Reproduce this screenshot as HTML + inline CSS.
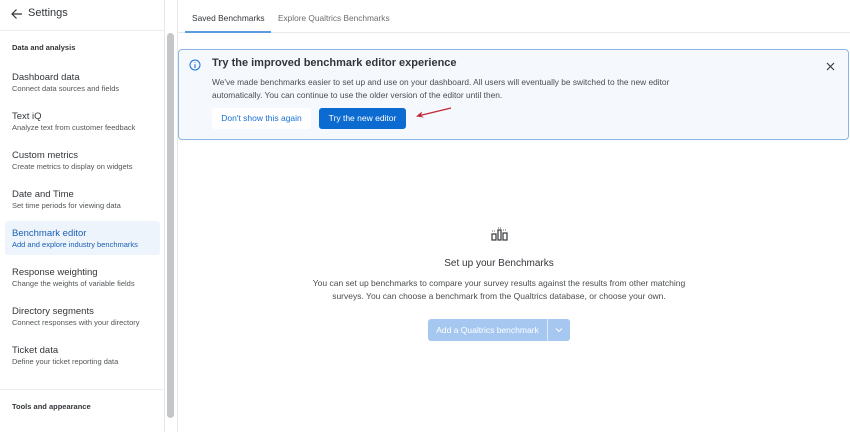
<!DOCTYPE html><html><head><style>
*{margin:0;padding:0;box-sizing:border-box}
body{width:850px;height:432px;overflow:hidden;font-family:"Liberation Sans",sans-serif;background:#fff;position:relative;color:#32363a}
.a{position:absolute}
.t{font-size:9.5px;color:#32363a}
.s{font-size:7.5px;color:#525659}
</style></head><body>
<div class="a" style="left:0;top:0;width:165px;height:432px;border-right:1px solid #e4e6e8"></div>
<div class="a" style="left:0;top:30px;width:165px;height:1px;background:#ebedef"></div>
<svg class="a" style="left:11px;top:8px" width="12" height="12" viewBox="0 0 12 12"><path d="M11 6H1M5.5 1.5L1 6l4.5 4.5" stroke="#32363a" stroke-width="1.2" fill="none"/></svg>
<div class="a" style="left:28px;top:7px;font-size:11px;color:#32363a">Settings</div>
<div class="a" style="left:12px;top:43px;font-size:7.5px;font-weight:bold;color:#32363a">Data and analysis</div>
<div class="a" style="left:5px;top:221px;width:155px;height:34px;background:#eef4fc;border-radius:3px"></div>
<div class="a t" style="left:12px;top:72px">Dashboard data</div><div class="a s" style="left:12px;top:84px">Connect data sources and fields</div>
<div class="a t" style="left:12px;top:111px">Text iQ</div><div class="a s" style="left:12px;top:123px">Analyze text from customer feedback</div>
<div class="a t" style="left:12px;top:150px">Custom metrics</div><div class="a s" style="left:12px;top:162px">Create metrics to display on widgets</div>
<div class="a t" style="left:12px;top:189px">Date and Time</div><div class="a s" style="left:12px;top:201px">Set time periods for viewing data</div>
<div class="a t" style="left:12px;top:228px;color:#1a5fb4">Benchmark editor</div><div class="a s" style="left:12px;top:240px;color:#1a5fb4">Add and explore industry benchmarks</div>
<div class="a t" style="left:12px;top:267px">Response weighting</div><div class="a s" style="left:12px;top:279px">Change the weights of variable fields</div>
<div class="a t" style="left:12px;top:306px">Directory segments</div><div class="a s" style="left:12px;top:318px">Connect responses with your directory</div>
<div class="a t" style="left:12px;top:345px">Ticket data</div><div class="a s" style="left:12px;top:357px">Define your ticket reporting data</div>
<div class="a" style="left:0;top:389px;width:165px;height:1px;background:#ebedef"></div>
<div class="a" style="left:12px;top:402px;font-size:7.5px;font-weight:bold">Tools and appearance</div>
<div class="a" style="left:167px;top:33px;width:7px;height:385px;background:#c4c6c8;border-radius:4px"></div>
<div class="a" style="left:177px;top:0;width:1px;height:432px;background:#e8e9ea"></div>
<div class="a" style="left:178px;top:32px;width:672px;height:1px;background:#e8e9ea"></div>
<div class="a" style="left:192px;top:13px;font-size:8.4px;color:#32363a">Saved Benchmarks</div>
<div class="a" style="left:278px;top:13px;font-size:8.3px;color:#6a6d70">Explore Qualtrics Benchmarks</div>
<div class="a" style="left:185px;top:31px;width:86px;height:2px;background:#5a9ae0"></div>
<div class="a" style="left:178px;top:49px;width:671px;height:91px;background:#f5f9fd;border:1px solid #8db6e4;border-radius:4px"></div>
<svg class="a" style="left:189px;top:59px" width="12" height="12" viewBox="0 0 12 12"><circle cx="6" cy="6" r="5" stroke="#1a6fd6" stroke-width="1" fill="none"/><path d="M6 5.2V9M6 3.2v.8" stroke="#1a6fd6" stroke-width="1.1"/></svg>
<div class="a" style="left:212px;top:57px;font-size:11px;font-weight:bold;color:#32363a">Try the improved benchmark editor experience</div>
<div class="a" style="left:212px;top:76px;font-size:8.35px;line-height:12.5px;color:#4a4d50">We've made benchmarks easier to set up and use on your dashboard. All users will eventually be switched to the new editor<br>automatically. You can continue to use the older version of the editor until then.</div>
<svg class="a" style="left:826px;top:62px" width="9" height="9" viewBox="0 0 9 9"><path d="M1 1l7 7M8 1L1 8" stroke="#32363a" stroke-width="1.1"/></svg>
<div class="a" style="left:212px;top:108px;width:99px;height:21px;background:#fff;border-radius:3px;font-size:8.5px;color:#1a6fd6;text-align:center;line-height:21px">Don't show this again</div>
<div class="a" style="left:319px;top:108px;width:87px;height:21px;background:#0b6bd1;border-radius:3px;font-size:8.5px;color:#fff;text-align:center;line-height:21px">Try the new editor</div>
<svg class="a" style="left:412px;top:104px" width="42" height="16" viewBox="0 0 42 16"><path d="M39 4L6 12" stroke="#c0283a" stroke-width="1.4"/><path d="M4 12.5l6-5-1 4 3 2z" fill="#c0283a"/></svg>
<svg class="a" style="left:491px;top:227px" width="17" height="14" viewBox="0 0 17 14"><g stroke="#32363a" stroke-width="1.2" fill="none"><rect x="1" y="7" width="4" height="6"/><rect x="7" y="3" width="3" height="10"/><rect x="12" y="6" width="4" height="7"/></g><path d="M1 4h3M12 3h4M7 1h3" stroke="#32363a" stroke-width=".8" stroke-dasharray="1 1"/></svg>
<div class="a" style="left:300px;top:258px;width:398px;text-align:center;font-size:10px;color:#32363a">Set up your Benchmarks</div>
<div class="a" style="left:300px;top:277px;width:398px;text-align:center;font-size:8.5px;line-height:12.5px;color:#4a4d50">You can set up benchmarks to compare your survey results against the results from other matching surveys. You can choose a benchmark from the Qualtrics database, or choose your own.</div>
<div class="a" style="left:428px;top:319px;width:142px;height:22px;background:#a6c8f0;border-radius:3px"></div>
<div class="a" style="left:547px;top:319px;width:1px;height:22px;background:#fff;opacity:.6"></div>
<div class="a" style="left:428px;top:319px;width:119px;height:22px;font-size:8.5px;color:#fff;text-align:center;line-height:22px">Add a Qualtrics benchmark</div>
<svg class="a" style="left:555px;top:327px" width="8" height="6" viewBox="0 0 8 6"><path d="M1 1.5l3 3 3-3" stroke="#fff" stroke-width=".9" fill="none"/></svg>
</body></html>
